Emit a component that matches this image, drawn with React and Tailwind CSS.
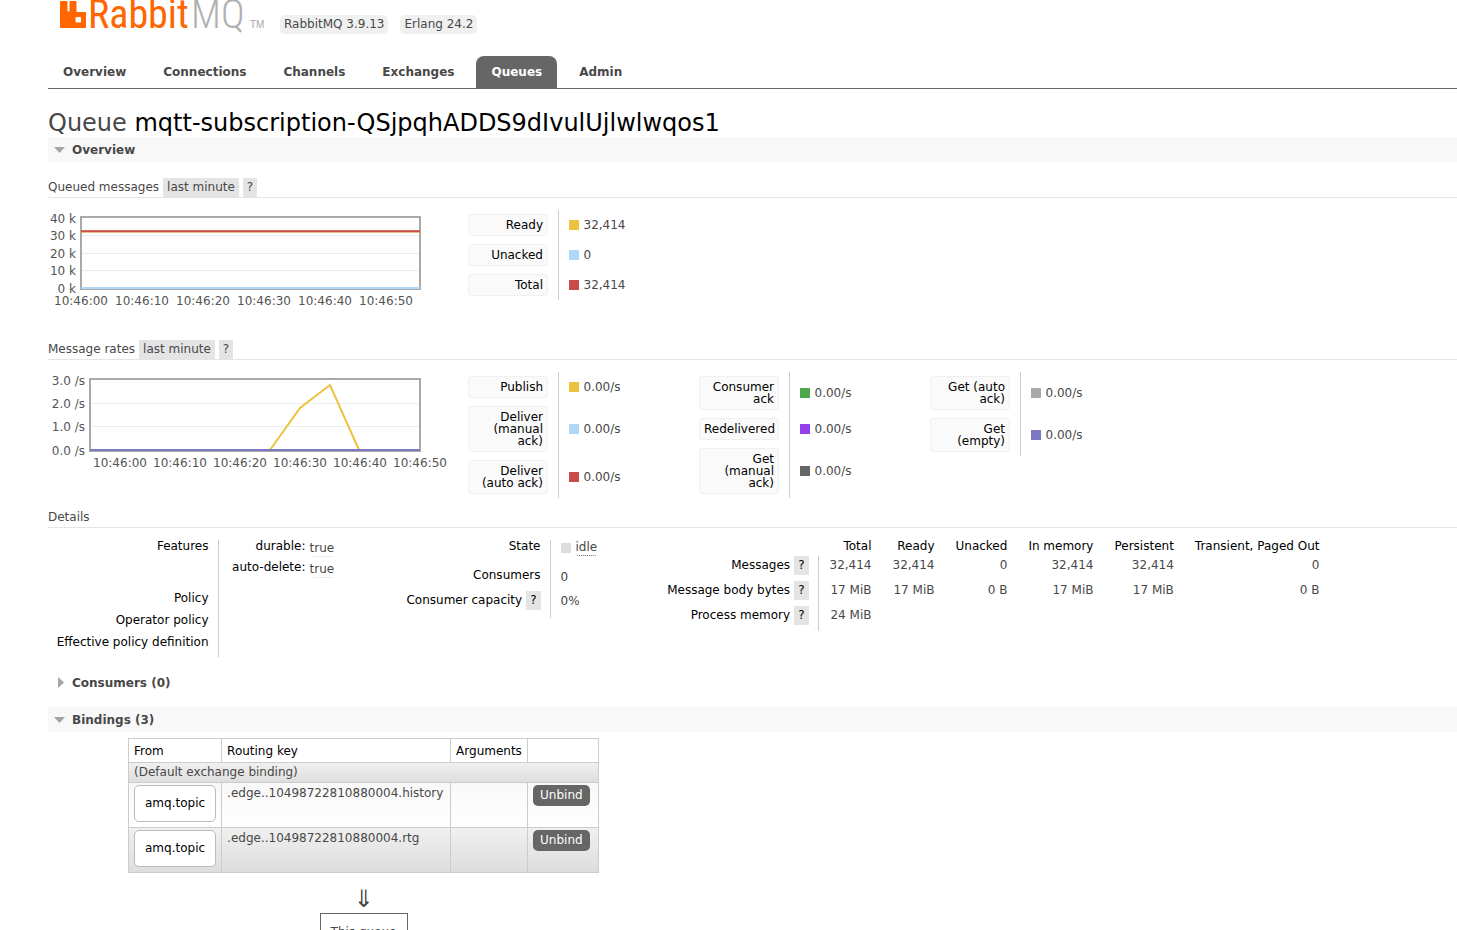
import React, { useState } from "react";

const tabs = ["Overview", "Connections", "Channels", "Exchanges", "Queues", "Admin"];

const queuedLegend = [
	{ label: "Ready", value: "32,414", color: "bg-[#edc240]" },
	{ label: "Unacked", value: "0", color: "bg-[#afd8f8]" },
	{ label: "Total", value: "32,414", color: "bg-[#cb4b4b]" },
];

const rateLegends = [
	[
		{ label: "Publish", value: "0.00/s", color: "bg-[#edc240]" },
		{ label: "Deliver (manual ack)", value: "0.00/s", color: "bg-[#afd8f8]" },
		{ label: "Deliver (auto ack)", value: "0.00/s", color: "bg-[#cb4b4b]" },
	],
	[
		{ label: "Consumer ack", value: "0.00/s", color: "bg-[#4da74d]" },
		{ label: "Redelivered", value: "0.00/s", color: "bg-[#9440ed]" },
		{ label: "Get (manual ack)", value: "0.00/s", color: "bg-[#666666]" },
	],
	[
		{ label: "Get (auto ack)", value: "0.00/s", color: "bg-[#aaaaaa]" },
		{ label: "Get (empty)", value: "0.00/s", color: "bg-[#7c79c3]" },
	],
];

const messageColumns = ["Total", "Ready", "Unacked", "In memory", "Persistent", "Transient, Paged Out"];

const messageRows = [
	{ label: "Messages", values: ["32,414", "32,414", "0", "32,414", "32,414", "0"] },
	{ label: "Message body bytes", values: ["17 MiB", "17 MiB", "0 B", "17 MiB", "17 MiB", "0 B"] },
	{ label: "Process memory", values: ["24 MiB", "", "", "", "", ""] },
];

const bindings = [
	{ from: "amq.topic", key: ".edge..10498722810880004.history", shade: "from-[#f8f8f8] to-white" },
	{ from: "amq.topic", key: ".edge..10498722810880004.rtg", shade: "from-[#f0f0f0] to-[#dddddd]" },
];

const times = ["10:46:00", "10:46:10", "10:46:20", "10:46:30", "10:46:40", "10:46:50"];

const Logo = () => (
	<a href="#/" aria-label="RabbitMQ" className="block ml-3">
		<svg width="208" height="34" viewBox="0 0 208 34">
			<path
				fill="#ff6600"
				d="M1 1h5.500q1 0 1 1v9q0 .5 .5 .5h1q.5 0 .5-.5v-9q0-1 1-1h5q1 0 1 1v9.500q0 .5 .5 .5h8q1 0 1 1v14q0 1-1 1h-24q-1 0-1-1v-25q0-1 1-1zM16.500 17q-1 0-1 1v3.500q0 1 1 1h3.500q1 0 1-1v-3.500q0-1-1-1z"
			/>
			<g fontSize="40" fontWeight="300" fontFamily="'Roboto Condensed', 'Roboto', 'Liberation Sans Narrow', sans-serif">
				<text x="28" y="28" fill="#ff6600" fontWeight="400">Rabbit</text>
				<text x="131" y="28" fill="#b0b0b0">MQ</text>
			</g>
			<text x="190" y="28" fontSize="10" fill="#a8a8a8" fontFamily="'Liberation Sans', sans-serif">TM</text>
		</svg>
	</a>
);

const Help = () => (
	<button type="button" className="bg-[#e4e4e4] px-1 leading-[19px] cursor-pointer">?</button>
);

const SectionBar = ({ title, open, onToggle }) => (
	<h2>
		<button
			type="button"
			onClick={onToggle}
			className={`flex w-full items-center h-[25px] font-bold cursor-pointer ${open ? "bg-[#f8f8f8]" : ""}`}
		>
			<svg width="24" height="12" viewBox="0 0 24 12" fill="#a4a4a4">
				{open ? <path d="M6 3h11l-5.500 6z" /> : <path d="M10 0v11l6-5.500z" />}
			</svg>
			{title}
		</button>
	</h2>
);

const ChartHeading = ({ title }) => (
	<h3 className="flex gap-1 leading-[19px] border-b border-[#e4e4e4]">
		{title}
		<button type="button" className="bg-[#e4e4e4] px-1 cursor-pointer">last minute</button>
		<Help />
	</h3>
);

const Chart = ({ left, labels, ticks, gridLines, firstTime, timeStep, children }) => (
	<svg width="420" height="104" viewBox="0 0 420 104" className="shrink-0" fontSize="12" fill="#545454">
		{labels.map((label, i) => (
			<text key={label} x={left - 4} y={ticks[i]} textAnchor="end">{label}</text>
		))}
		{times.map((time, i) => (
			<text key={time} x={firstTime + i * timeStep} y="95" textAnchor="middle">{time}</text>
		))}
		{gridLines.map((y) => (
			<path key={y} d={`M${left} ${y}H372`} stroke="#ececec" />
		))}
		<rect x={left + 1} y="7" width={371 - left} height="72" fill="none" stroke="#a9a9a9" strokeWidth="2" />
		{children}
	</svg>
);

const Legend = ({ items }) => (
	<table className="w-[231px] self-start border-collapse">
		<tbody>
			{items.map((item) => (
				<tr key={item.label}>
					<th className="w-[90px] py-1 pr-[9px] border-r border-[#cccccc] font-normal text-black">
						<span className="block w-20 rounded-[3px] border border-[#f0f0f0] bg-[#fafafa] p-1 text-right leading-3">
							{item.label}
						</span>
					</th>
					<td className="pl-[10px]">
						<div className="flex items-center gap-[5px]">
							<span className={`size-[10px] ${item.color}`} />
							{item.value}
						</div>
					</td>
				</tr>
			))}
		</tbody>
	</table>
);

const Details = () => (
	<div className="flex items-start pt-3">
		<table className="w-[350px] shrink-0 border-collapse">
			<tbody>
				<tr className="h-[46px] align-top">
					<th className="w-[170px] pr-[9px] border-r border-[#cccccc] text-right font-normal text-black leading-3">Features</th>
					<td>
						<table>
							<tbody>
								{["durable:", "auto-delete:"].map((name) => (
									<tr key={name} className="h-[21px] align-top">
										<th className="w-[87px] text-right font-normal text-black leading-3">{name}</th>
										<td className="pl-1 leading-4">
											<abbr className="block rounded-[3px] border-b border-dotted border-[#dddddd] no-underline">true</abbr>
										</td>
									</tr>
								))}
							</tbody>
						</table>
					</td>
				</tr>
				{["Policy", "Operator policy", "Effective policy definition"].map((name) => (
					<tr key={name} className="h-[22px] last:h-[27px] align-top">
						<th className="pr-[9px] pt-[6px] border-r border-[#cccccc] text-right font-normal text-black leading-3">{name}</th>
						<td></td>
					</tr>
				))}
			</tbody>
		</table>

		<table className="w-[260px] shrink-0 border-collapse">
			<tbody>
				<tr className="h-[29px] align-top">
					<th className="w-[152px] pr-[9px] border-r border-[#cccccc] text-right font-normal text-black leading-3">State</th>
					<td className="pl-[10px]">
						<div className="flex items-center gap-[5px] leading-4">
							<span className="size-[10px] bg-[#dddddd]" />
							<abbr className="rounded-[3px] border-b border-dotted border-[#666666] leading-[15px] no-underline">idle</abbr>
						</div>
					</td>
				</tr>
				<tr className="h-[22px] align-top">
					<th className="pr-[9px] border-r border-[#cccccc] text-right font-normal text-black leading-3">Consumers</th>
					<td className="pl-[10px] leading-4">0</td>
				</tr>
				<tr className="h-[27px] align-top">
					<th className="pr-[9px] border-r border-[#cccccc] font-normal text-black">
						<div className="flex justify-end gap-1 leading-[19px]">
							Consumer capacity <Help />
						</div>
					</th>
					<td className="pl-[10px] pt-px leading-[19px]">0%</td>
				</tr>
			</tbody>
		</table>

		<table className="shrink-0 border-collapse whitespace-nowrap">
			<thead>
				<tr className="h-4 align-top text-black">
					<td className="w-[160px]"></td>
					{messageColumns.map((name) => (
						<th key={name} className="pl-[11px] pr-[10px] text-right font-normal leading-3">{name}</th>
					))}
				</tr>
			</thead>
			<tbody>
				{messageRows.map((row) => (
					<tr key={row.label} className="h-[25px] align-top">
						<th className="pr-[9px] border-r border-[#cccccc] font-normal text-black">
							<div className="flex justify-end gap-1 leading-[19px]">
								{row.label} <Help />
							</div>
						</th>
						{row.values.map((value, i) => (
							<td key={i} className="pl-[11px] pr-[10px] text-right leading-[19px]">{value}</td>
						))}
					</tr>
				))}
			</tbody>
		</table>
	</div>
);

const Bindings = () => (
	<div className="ml-20 mt-[6px] flex w-fit flex-col items-center">
		<table className="border-collapse border border-[#cccccc]">
			<thead>
				<tr className="h-6 text-left text-black">
					<th className="border border-[#cccccc] px-[5px] font-normal">From</th>
					<th className="w-[229px] border border-[#cccccc] px-[5px] font-normal">Routing key</th>
					<th className="w-[77px] border border-[#cccccc] px-[5px] font-normal">Arguments</th>
					<td className="border border-[#cccccc]"></td>
				</tr>
			</thead>
			<tbody>
				<tr className="h-5 bg-linear-to-b from-[#f0f0f0] to-[#dddddd]">
					<td colSpan={4} className="border border-[#cccccc] px-[5px] leading-[19px]">(Default exchange binding)</td>
				</tr>
				{bindings.map((binding) => (
					<tr key={binding.key} className={`h-[45px] align-top bg-linear-to-b ${binding.shade}`}>
						<td className="border border-[#cccccc] px-[5px] py-[2px]">
							<a href="#/exchanges" className="block rounded-[5px] border border-[#bbbbbb] bg-white px-[10px] leading-[35px] text-black">
								{binding.from}
							</a>
						</td>
						<td className="border border-[#cccccc] px-[5px] py-[2px]">{binding.key}</td>
						<td className="border border-[#cccccc]"></td>
						<td className="w-[71px] border border-[#cccccc] px-[5px] py-[2px]">
							<button type="button" className="block rounded-[5px] bg-[#666666] px-[7px] leading-[21px] text-white cursor-pointer">
								Unbind
							</button>
						</td>
					</tr>
				))}
			</tbody>
		</table>
		<span className="mt-3 text-2xl leading-7">⇓</span>
		<div className="border border-[#666666] px-[10px] py-[10px]">This queue</div>
	</div>
);

const App = () => {
	const [open, setOpen] = useState({ overview: true, consumers: false, bindings: true });

	const toggle = (name) => setOpen({ ...open, [name]: !open[name] });

	return (
		<div className="min-h-screen overflow-hidden bg-white pl-12 font-['Verdana','DejaVu_Sans',sans-serif] text-xs text-[#484848]">
			<header className="flex items-start">
				<Logo />
				<ul className="mt-[15px] ml-3 flex gap-3">
					<li className="rounded-[5px] bg-[#f0f0f0] px-1 leading-[19px]">RabbitMQ 3.9.13</li>
					<li className="rounded-[5px] bg-[#f0f0f0] px-1 leading-[19px]">Erlang 24.2</li>
				</ul>
			</header>

			<nav className="mt-[22px] flex gap-[7px] border-b border-[#666666] font-bold">
				{tabs.map((tab) => (
					<a
						key={tab}
						href={`#/${tab.toLowerCase()}`}
						className={`rounded-t-lg px-[15px] leading-8 ${tab === "Queues" ? "bg-[#666666] text-white" : ""}`}
					>
						{tab}
					</a>
				))}
			</nav>

			<h1 className="mt-5 text-2xl leading-7">
				Queue <b className="font-normal text-black">mqtt-subscription-QSjpqhADDS9dIvulUjlwlwqos1</b>
			</h1>

			<SectionBar title="Overview" open={open.overview} onToggle={() => toggle("overview")} />
			{open.overview && (
				<div className="pt-4">
					<ChartHeading title="Queued messages" />
					<div className="flex pt-3 pb-[26px]">
						<Chart
							left={32}
							labels={["40 k", "30 k", "20 k", "10 k", "0 k"]}
							ticks={[13, 30, 48, 65, 83]}
							gridLines={[25.5, 43.5, 60.5]}
							firstTime={33}
							timeStep={61}
						>
							<path d="M33 21.500H372" stroke="#edc240" strokeWidth="2" />
							<path d="M33 21.300H372" stroke="#cb4b4b" strokeWidth="2" />
							<path d="M33 78H372" stroke="#afd8f8" strokeWidth="2" />
						</Chart>
						<Legend items={queuedLegend} />
					</div>

					<ChartHeading title="Message rates" />
					<div className="flex pt-3">
						<Chart
							left={41}
							labels={["3.0 /s", "2.0 /s", "1.0 /s", "0.0 /s"]}
							ticks={[13, 36, 59, 83]}
							gridLines={[31.5, 54.5]}
							firstTime={72}
							timeStep={60}
						>
							<path d="M222 78L252 36L282 13L311 78" fill="none" stroke="#edc240" strokeWidth="2" />
							<path d="M42 78H372" stroke="#7c79c3" strokeWidth="2" />
						</Chart>
						{rateLegends.map((items) => (
							<Legend key={items[0].label} items={items} />
						))}
					</div>

					<h3 className="mt-[10px] border-b border-[#e4e4e4] leading-[19px]">Details</h3>
					<Details />
				</div>
			)}

			<div className="mt-[13px]">
				<SectionBar title="Consumers (0)" open={open.consumers} onToggle={() => toggle("consumers")} />
			</div>
			<div className="mt-3">
				<SectionBar title="Bindings (3)" open={open.bindings} onToggle={() => toggle("bindings")} />
			</div>
			{open.bindings && <Bindings />}
		</div>
	);
};

export default App;
